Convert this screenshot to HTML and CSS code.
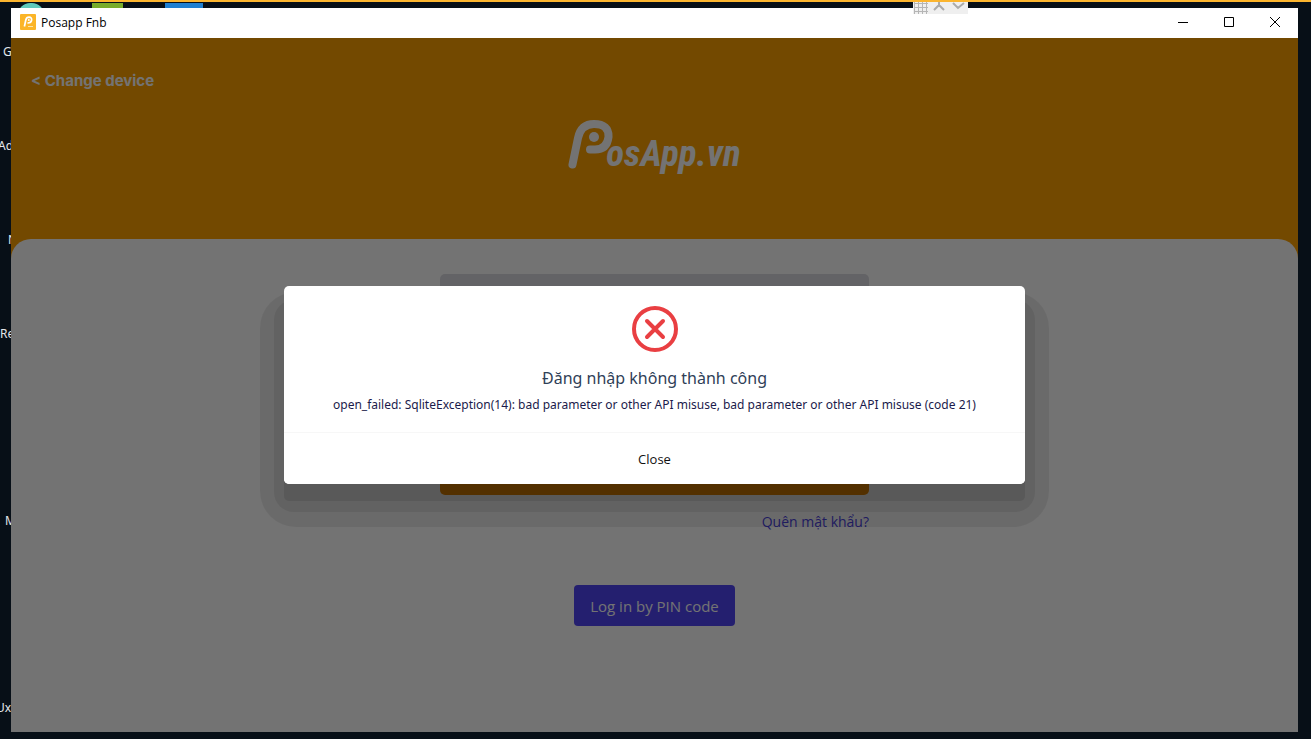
FILE: index.html
```html
<!DOCTYPE html>
<html lang="vi">
<head>
<meta charset="utf-8">
<title>Posapp Fnb</title>
<link rel="stylesheet" href="styles.css">
</head>
<body>
<div class="desktop">
  <div class="shortcut shortcut-teal"></div>
  <div class="shortcut shortcut-green"></div>
  <div class="shortcut shortcut-blue"></div>
  <span class="desk-label row-1">G</span>
  <span class="desk-label row-2">Ad</span>
  <span class="desk-label row-3">N</span>
  <span class="desk-label row-4">Re</span>
  <span class="desk-label row-5">M</span>
  <span class="desk-label row-6">Ux.</span>

  <div class="window">
    <header class="titlebar">
      <svg class="app-icon" viewBox="0 0 16 16" aria-hidden="true">
        <rect width="16" height="16" rx="1" fill="#fbb527"/>
        <path d="M4.4 12.5 5.8 6Q6.4 3.2 9 3.2 12 3.3 11.6 6.2 11.2 9 8 9H7.4" fill="none" stroke="#fff" stroke-width="1.7"/>
        <circle cx="8.8" cy="6.1" r="1" fill="#fff"/>
        <path d="M8 12.5h5" stroke="#fde3a6" stroke-width="1"/>
      </svg>
      <span class="title">Posapp Fnb</span>
      <div class="controls">
        <button class="control" aria-label="Minimize"><svg viewBox="0 0 12 12"><path d="M1 6.5h10"/></svg></button>
        <button class="control" aria-label="Maximize"><svg viewBox="0 0 12 12"><path d="M1.5 1.500h9v9h-9z"/></svg></button>
        <button class="control" aria-label="Close window"><svg viewBox="0 0 12 12"><path d="M1 1l10 10M11 1 1 11"/></svg></button>
      </div>
    </header>

    <main class="app">
      <div class="brand">
        <a class="back" href="#">&lt; Change device</a>
        <div class="logo">
          <svg class="logo-mark" viewBox="0 0 46 52" aria-hidden="true">
            <path d="M4.500 45.500 10 19Q13 5 26 5 41 5 40.500 18 39 30.500 27 30.500H22" fill="none" stroke="#fff" stroke-width="8" stroke-linecap="round" stroke-linejoin="round"/>
            <circle cx="26" cy="18" r="5" fill="#fff"/>
          </svg>
          <span class="logo-text">osApp.vn</span>
        </div>
      </div>

      <div class="panel">
        <form class="login">
          <input class="field" type="text" aria-label="Tài khoản">
          <input class="field" type="password" aria-label="Mật khẩu">
          <button class="submit" type="button" aria-label="Đăng nhập"></button>
          <a class="forgot" href="#">Quên mật khẩu?</a>
        </form>
        <button class="pin" type="button">Log in by PIN code</button>
      </div>

      <div class="overlay">
        <div class="dialog" role="alertdialog" aria-labelledby="dialog-title" aria-describedby="dialog-text">
          <div class="dialog-body">
            <svg class="error-icon" viewBox="0 0 46 46" aria-hidden="true">
              <circle cx="23" cy="23" r="21"/>
              <path d="M15 15l16 16M31 15 15 31"/>
            </svg>
            <h1 class="dialog-title" id="dialog-title">Đăng nhập không thành công</h1>
            <p class="dialog-text" id="dialog-text">open_failed: SqliteException(14): bad parameter or other API misuse, bad parameter or other API misuse (code 21)</p>
          </div>
          <button class="dialog-close" type="button">Close</button>
        </div>
      </div>
    </main>
  </div>

  <div class="session-bar">
    <svg viewBox="0 0 56 14" aria-hidden="true">
      <path d="M1.500 0v13M5.500 0v13M9.500 0v13M13.500 0v13M1 1.500h14M1 5.500h14M1 9.500h14M1 13h14" stroke="#b5b5b5" fill="none"/>
      <path d="M26 0v3l-5 5M26 3l5 5M40 1l5 5 6-5" stroke="#ababab" stroke-width="2" fill="none"/>
    </svg>
  </div>
</div>
</body>
</html>
```
FILE: styles.css
```css
* { box-sizing: border-box; }

body {
  margin: 0;
  font-family: "Open Sans", "Noto Sans", sans-serif;
}

button { font-family: inherit; cursor: pointer; }

.desktop {
  position: relative;
  display: flex;
  min-height: 100vh;
  padding: 6px 13px 7px 11px;
  border-top: 2px solid #fbb52f;
  background: #070f17;
  overflow: hidden;
}

/* Desktop icons and captions behind the window */
.shortcut {
  position: absolute;
  top: 1px;
  height: 12px;
}
.shortcut-teal { left: 18px; width: 26px; border-radius: 12px 12px 0 0; background: #5fc9ba; }
.shortcut-green { left: 92px; width: 31px; background: #78ac2b; }
.shortcut-blue { left: 165px; width: 38px; background: #1f7fd0; }

.desk-label {
  position: absolute;
  color: #e4e7ea;
  font-family: "Noto Sans", sans-serif;
  font-size: 12px;
  line-height: 16px;
}
.row-1 { left: 3px; top: 42px; }
.row-2 { left: -2px; top: 136px; }
.row-3 { left: 8px; top: 230px; }
.row-4 { left: 0; top: 324px; }
.row-5 { left: 5px; top: 511px; }
.row-6 { left: -4px; top: 698px; }

.window {
  position: relative;
  flex: 1;
  display: flex;
  flex-direction: column;
  background: #fff;
}

.titlebar {
  display: flex;
  align-items: center;
  height: 30px;
  padding: 0 0 2px 9px;
  gap: 5px;
}
.app-icon { width: 16px; height: 16px; }
.title { font-size: 12px; color: #000; }
.controls { display: flex; margin-left: auto; }
.control {
  display: grid;
  place-items: center;
  width: 46px;
  height: 28px;
  padding: 0;
  border: 0;
  background: none;
}
.control svg { width: 12px; height: 12px; fill: none; stroke: #000; }

.app {
  position: relative;
  flex: 1;
  display: flex;
  flex-direction: column;
  background: #ffa200;
}

.brand {
  display: flex;
  flex-direction: column;
  height: 201px;
  padding: 32px 20px 0;
}
.back {
  align-self: flex-start;
  color: #fff;
  font-family: Inter, sans-serif;
  font-size: 15px;
  font-weight: 700;
  line-height: 22px;
  text-decoration: none;
}
.logo {
  display: flex;
  align-self: center;
  margin-top: 27px;
  color: #fff;
}
.logo-mark { width: 46px; height: 52px; }
.logo-text {
  margin: 13px 0 0 -8px;
  font-family: "Liberation Sans Narrow", "Roboto Condensed", Roboto, sans-serif;
  font-size: 37px;
  font-style: italic;
  font-weight: 700;
  line-height: 44px;
}

.panel {
  flex: 1;
  display: flex;
  flex-direction: column;
  align-items: center;
  padding: 35px 20px 0;
  border-radius: 20px 20px 0 0;
  background: #fff;
}
.login {
  display: flex;
  flex-direction: column;
  width: 100%;
  max-width: 429px;
}
.field {
  height: 60px;
  margin-bottom: 20px;
  border: 0;
  border-radius: 5px;
  background: #dcdce2;
}
.submit {
  height: 61px;
  border: 0;
  border-radius: 5px;
  background: #f08c00;
}
.forgot {
  align-self: flex-end;
  margin-top: 16px;
  color: #4f46e5;
  font-size: 14px;
  line-height: 22px;
  text-decoration: none;
}
.pin {
  height: 41px;
  margin-top: 52px;
  padding: 0 16px;
  border: 0;
  border-radius: 4px;
  background: #5145f5;
  color: #fff;
  font-size: 15px;
}

.overlay {
  position: absolute;
  z-index: 0;
  inset: 0;
  display: flex;
  align-items: center;
  justify-content: center;
  background: rgba(0, 0, 0, .55);
}
.dialog {
  position: relative;
  width: 741px;
  max-width: 90%;
  border-radius: 5px;
  background: #fff;
  box-shadow: 0 17px 0 0 rgba(0, 0, 0, .09);
}
/* Stepped shadow rings around the dialog */
.dialog::before,
.dialog::after {
  content: "";
  position: absolute;
  z-index: -1;
  background: rgba(0, 0, 0, .07);
}
.dialog::before { inset: 6px -24px -43px; border-radius: 36px; }
.dialog::after { inset: 14px -10px -28px; border-radius: 20px; }

.dialog-body {
  display: flex;
  flex-direction: column;
  align-items: center;
  padding: 20px 16px 16px;
  text-align: center;
}
.error-icon {
  width: 46px;
  height: 46px;
  fill: none;
  stroke: #e93f42;
  stroke-width: 4;
  stroke-linecap: round;
}
.dialog-title {
  margin: 14px 0 4px;
  color: #2f4057;
  font-family: "Noto Sans", sans-serif;
  font-size: 16px;
  font-weight: 400;
  line-height: 24px;
}
.dialog-text {
  margin: 0;
  color: #1b1b4b;
  font-family: "Noto Sans", sans-serif;
  font-size: 12px;
  line-height: 22px;
}
.dialog-close {
  display: block;
  width: 100%;
  height: 52px;
  border: 0;
  border-top: 1px solid #f7f7f7;
  border-radius: 0 0 5px 5px;
  background: #fff;
  color: #111;
  font-size: 13px;
}

/* Remote session toolbar tucked under the top edge */
.session-bar {
  position: absolute;
  top: 0;
  left: 70%;
  width: 55px;
  height: 12px;
  margin-left: -5px;
  overflow: hidden;
  background: #efefef;
}
.session-bar svg { display: block; width: 56px; height: 14px; }
```
